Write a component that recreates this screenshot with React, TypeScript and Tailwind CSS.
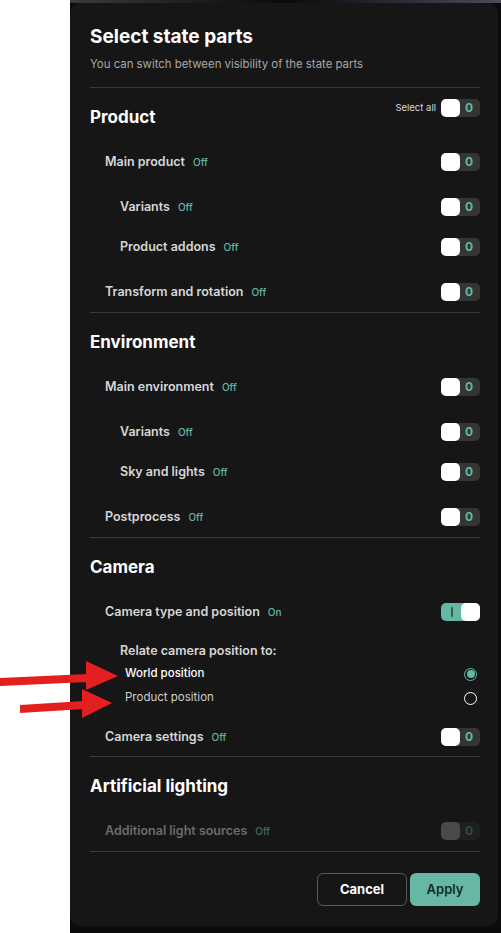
import React from "react";

const Toggle = ({ on = false, dim = false }: { on?: boolean; dim?: boolean }) => {
  if (on) {
    return (
      <div className="flex h-[18px] w-[39px] items-center justify-between rounded-[5px] bg-[#63b7a3]">
        <span className="ml-[10px] h-[10px] w-[2px] rounded-[1px] bg-[#3c5a52]" />
        <span className="h-[18px] w-[19px] rounded-[5px] bg-white" />
      </div>
    );
  }
  return (
    <div className={`flex h-[18px] w-[39px] items-center justify-between rounded-[5px] ${dim ? "bg-[#1f1f1f]" : "bg-[#353535]"}`}>
      <span className={`h-[18px] w-[19px] rounded-[5px] ${dim ? "bg-[#4a4a4a]" : "bg-white"}`} />
      <span className={`mr-[7px] text-[12px] font-bold leading-none ${dim ? "text-[#2f4a43]" : "text-[#63b7a3]"}`}>0</span>
    </div>
  );
};

const Row = ({
  label,
  status = "Off",
  sub = false,
  on = false,
  dim = false,
}: {
  label: string;
  status?: string;
  sub?: boolean;
  on?: boolean;
  dim?: boolean;
}) => (
  <div className={`flex h-[40px] items-center justify-between ${sub ? "pl-[30px]" : "pl-[15px]"}`}>
    <div className="flex items-center gap-[8px]">
      <span className={`text-[12.5px] font-semibold ${dim ? "text-[#6c6c6c]" : "text-[#d6d6d6]"}`}>{label}</span>
      <span className={`text-[10px] font-medium ${dim ? "text-[#3f6f62]" : "text-[#63b7a3]"}`}>{status}</span>
    </div>
    <Toggle on={on} dim={dim} />
  </div>
);

const Header = ({ title, selectAll = false }: { title: string; selectAll?: boolean }) => (
  <div className="flex items-start justify-between">
    <h2 className="pt-[17px] pb-[13px] text-[17px] font-bold leading-[24px] text-white">{title}</h2>
    {selectAll && (
      <div className="mt-[11px] flex items-center gap-[5px]">
        <span className="text-[9.5px] text-[#d6d6d6]">Select all</span>
        <Toggle />
      </div>
    )}
  </div>
);

const Divider = () => <div className="h-px bg-[#3a3a3a]" />;

const Radio = ({ checked }: { checked: boolean }) =>
  checked ? (
    <span className="flex h-[13px] w-[13px] items-center justify-center rounded-full border-[1.5px] border-[#63b7a3]">
      <span className="h-[8px] w-[8px] rounded-full bg-[#63b7a3]" />
    </span>
  ) : (
    <span className="h-[13px] w-[13px] rounded-full border-[1.5px] border-white" />
  );

export default function App() {
  return (
    <div className="relative flex h-[933px] w-[501px] overflow-hidden bg-white" style={{ fontFamily: "Inter, 'Noto Sans', sans-serif" }}>
      <div className="w-[70px] shrink-0 bg-white" />
      <div className="flex flex-1 flex-col bg-[#0b0b0b]">
        <div className="h-[3px] bg-gradient-to-r from-[#3a3a40] via-[#0a0a10] to-[#4c4d58]" />
        <div className="w-[428px] rounded-[10px] bg-[#161616] pl-[20px] pr-[18px] pt-[20px] pb-[20px]">
          <h1 className="text-[19px] font-bold leading-[28px] text-white">Select state parts</h1>
          <p className="mt-[5px] text-[11.4px] leading-[16px] text-[#a8a8a8]">You can switch between visibility of the state parts</p>
          <div className="mt-[15px]">
            <Divider />
          </div>

          <Header title="Product" selectAll />
          <Row label="Main product" />
          <div className="my-[5px]">
            <Row label="Variants" sub />
            <Row label="Product addons" sub />
          </div>
          <Row label="Transform and rotation" />
          <Divider />

          <Header title="Environment" />
          <Row label="Main environment" />
          <div className="my-[5px]">
            <Row label="Variants" sub />
            <Row label="Sky and lights" sub />
          </div>
          <Row label="Postprocess" />
          <Divider />

          <Header title="Camera" />
          <Row label="Camera type and position" status="On" on />
          <div className="pt-[10px] pb-[10px]">
            <div className="pl-[30px] text-[12.5px] font-semibold leading-[18px] text-[#d6d6d6]">Relate camera position to:</div>
            <div className="mt-[5px] flex h-[18px] items-center justify-between pl-[35px] pr-[3px]">
              <span className="text-[11.5px] font-medium text-white">World position</span>
              <Radio checked />
            </div>
            <div className="mt-[6px] flex h-[18px] items-center justify-between pl-[35px] pr-[3px]">
              <span className="text-[11.5px] text-[#cfcfcf]">Product position</span>
              <Radio checked={false} />
            </div>
          </div>
          <div className="-mb-px">
            <Row label="Camera settings" />
          </div>
          <Divider />

          <Header title="Artificial lighting" />
          <Row label="Additional light sources" dim />
          <Divider />

          <div className="mt-[21px] flex justify-end gap-[3px]">
            <button className="h-[33px] w-[90px] rounded-[6px] border border-[#5a5a5a] text-[13px] font-bold text-white">Cancel</button>
            <button className="h-[33px] w-[70px] rounded-[6px] bg-[#66b8a4] text-[13px] font-semibold text-[#1a2a26]">Apply</button>
          </div>
        </div>
        <div className="flex-1" />
      </div>

      <svg className="pointer-events-none absolute left-0 top-0" width="130" height="730" viewBox="0 0 130 730">
        <polygon points="0,678 88,674 88,682 0,686" fill="#e3201f" />
        <polygon points="86,661 118,676 86,690" fill="#e3201f" />
        <polygon points="20,705 84,701 84,709 20,713" fill="#e3201f" />
        <polygon points="82,689 112,703 82,718" fill="#e3201f" />
      </svg>
    </div>
  );
}
